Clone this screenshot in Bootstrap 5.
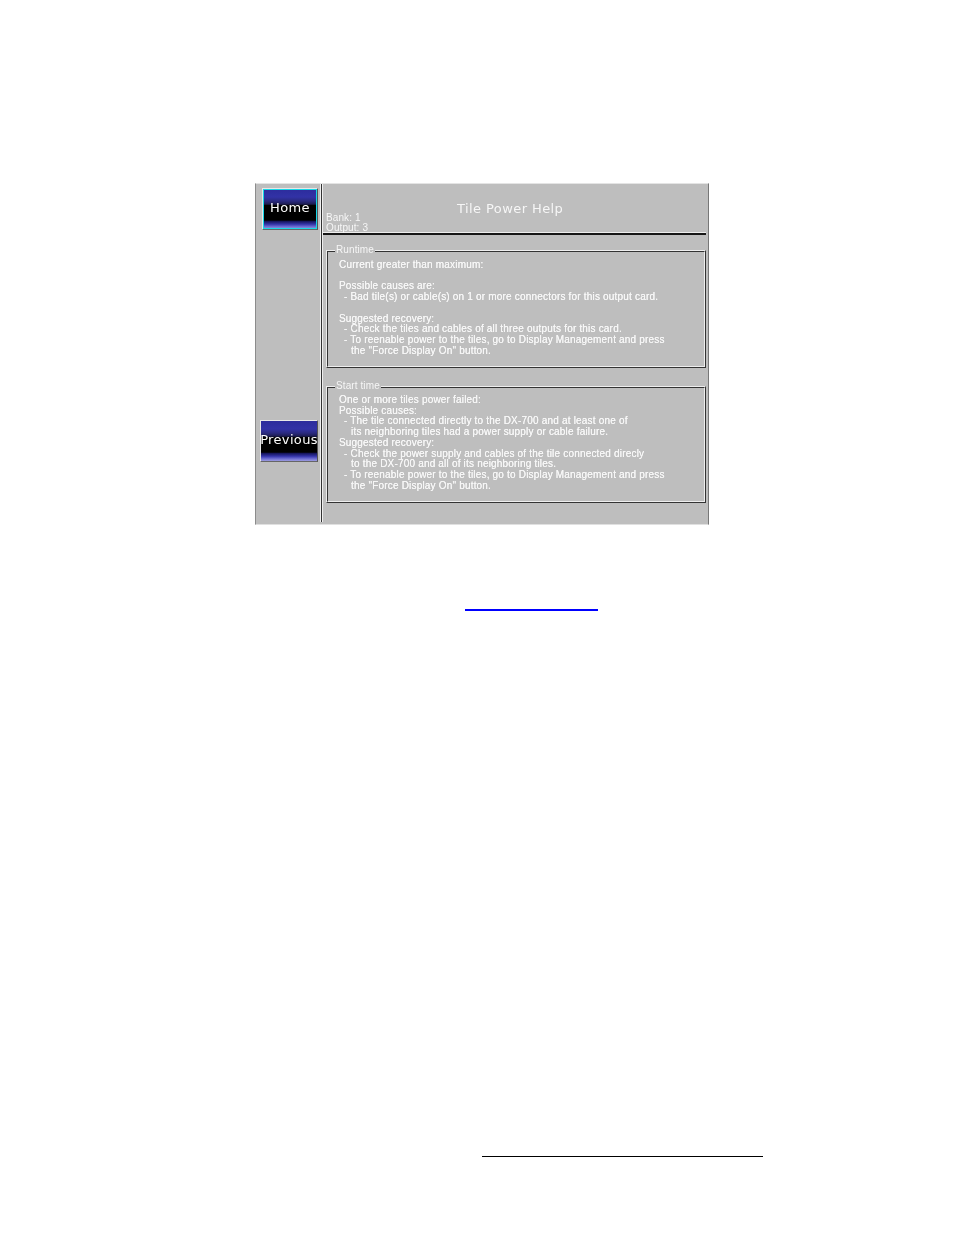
<!DOCTYPE html>
<html lang="en">
<head>
<meta charset="utf-8">
<title>Tile Power Help</title>
<link href="https://cdn.jsdelivr.net/npm/bootstrap@5.3.0/dist/css/bootstrap.min.css" rel="stylesheet">
<style>
html, body { background: #fff; margin: 0; }
.sheet { padding-top: 183px; height: 1235px; overflow: hidden; }
.panel-shot { margin-left: 255px; width: 454px; height: 342px; background: #bebebe; color: #f6f6f6;
  border-top: 1px solid #e4e4e4; border-left: 1px solid #8c8c8c; border-right: 1px solid #777; border-bottom: 1px solid #e0e0e0;
  font-family: "Liberation Sans", Arial, sans-serif; }
.side-col { width: 66px; flex: none; height: 338px; position: relative; border-right: 1px solid #333; box-shadow: inset -1px 0 0 #eee, 1px 0 0 #eee; }
.main-col { flex: 1 1 auto; min-width: 0; padding-left: 1px; }
.shot-btn { display: flex; align-items: center; justify-content: center; padding: 0; color: #fff; overflow: hidden; white-space: nowrap;
  font-family: "DejaVu Sans", sans-serif; font-size: 13px; letter-spacing: .35px; line-height: 1; border-radius: 0;
  border: 1px solid; border-color: #e8e8e8 #555 #666 #e8e8e8;
  background: linear-gradient(#2c2c9c 0, #3232a6 20%, #2a2a80 30%, #1c1c50 38%, #000 41%, #000 78%, #15155c 81%, #3434a8 88%, #6a6ad0 94%, #9c9ce0 100%); }
.shot-btn:hover { color: #fff; }
.btn-label { filter: blur(.15px); }
.btn-home { width: 56px; height: 42px; margin: 4px 0 0 6px; box-shadow: inset 0 0 0 1px #18d8e8; padding-bottom: 3px; }
.btn-prev { width: 58px; height: 42px; margin: 190px 0 0 4px; padding-bottom: 4px; }
.head-row { height: 51px; position: relative; border-bottom: 2px solid #151515; box-shadow: inset 0 -1px 0 #eee; margin-right: 2px; }
.head-title { font-family: "DejaVu Sans", sans-serif; font-size: 13px; letter-spacing: .42px; padding-top: 15px; margin-left: 134px; filter: blur(.25px); }
.head-meta { position: absolute; left: 3px; bottom: 0; font-size: 10px; line-height: 10px; letter-spacing: .1px; filter: blur(.3px); }
.grp { position: relative; border: 1px solid; border-color: #eee #333 #333 #eee; margin: 0 2px 0 3px; padding: 0 0 0 12px; min-width: 0; }
.grp::before { content: ""; position: absolute; inset: -4px 0 0 0; border: 1px solid; border-color: #333 #eee #eee #333; pointer-events: none; }
.grp legend { position: relative; z-index: 1; background: #bebebe; float: none; width: auto; margin: 0 0 0 -4px; padding: 0 1px; font-size: 10px; line-height: 10px; letter-spacing: .1px; filter: blur(.3px); }
.grp-a { margin-top: 10px; height: 123px; }
.grp-b { margin-top: 13px; height: 122px; }
.grp-lines { font-size: 10px; line-height: 10.72px; letter-spacing: .19px; white-space: nowrap; filter: blur(.3px); text-shadow: 0 0 .6px #fff; }
.grp-a .grp-lines { padding-top: 5px; }
.grp-b .grp-lines { padding-top: 4px; }
.ind-a { padding-left: 5px; }
.ind-b { padding-left: 12px; }
.blank-line { height: 10.72px; }
.rule-link { margin: 84px 0 0 465px; width: 133px; height: 2px; background: #00f; }
.rule-foot { margin: 545px 0 0 482px; width: 281px; height: 1px; background: #000; }
</style>
</head>
<body>
<div class="sheet">
  <div class="panel-shot d-flex">
    <div class="side-col d-flex flex-column">
      <a class="btn shot-btn btn-home" href="#"><span class="btn-label">Home</span></a>
      <a class="btn shot-btn btn-prev" href="#"><span class="btn-label">Previous</span></a>
    </div>
    <div class="main-col">
      <div class="head-row">
        <div class="head-title">Tile Power Help</div>
        <div class="head-meta">Bank: 1<br>Output: 3</div>
      </div>
      <fieldset class="grp grp-a">
        <legend>Runtime</legend>
        <div class="grp-lines">
          <div>Current greater than maximum:</div>
          <div class="blank-line"></div>
          <div>Possible causes are:</div>
          <div class="ind-a">- Bad tile(s) or cable(s) on 1 or more connectors for this output card.</div>
          <div class="blank-line"></div>
          <div>Suggested recovery:</div>
          <div class="ind-a">- Check the tiles and cables of all three outputs for this card.</div>
          <div class="ind-a">- To reenable power to the tiles, go to Display Management and press</div>
          <div class="ind-b">the "Force Display On" button.</div>
        </div>
      </fieldset>
      <fieldset class="grp grp-b">
        <legend>Start time</legend>
        <div class="grp-lines">
          <div>One or more tiles power failed:</div>
          <div>Possible causes:</div>
          <div class="ind-a">- The tile connected directly to the DX-700 and at least one of</div>
          <div class="ind-b">its neighboring tiles had a power supply or cable failure.</div>
          <div>Suggested recovery:</div>
          <div class="ind-a">- Check the power supply and cables of the tile connected direcly</div>
          <div class="ind-b">to the DX-700 and all of its neighboring tiles.</div>
          <div class="ind-a">- To reenable power to the tiles, go to Display Management and press</div>
          <div class="ind-b">the "Force Display On" button.</div>
        </div>
      </fieldset>
    </div>
  </div>
  <div class="rule-link"></div>
  <div class="rule-foot"></div>
</div>
<script src="https://cdn.jsdelivr.net/npm/bootstrap@5.3.0/dist/js/bootstrap.bundle.min.js"></script>
</body>
</html>
